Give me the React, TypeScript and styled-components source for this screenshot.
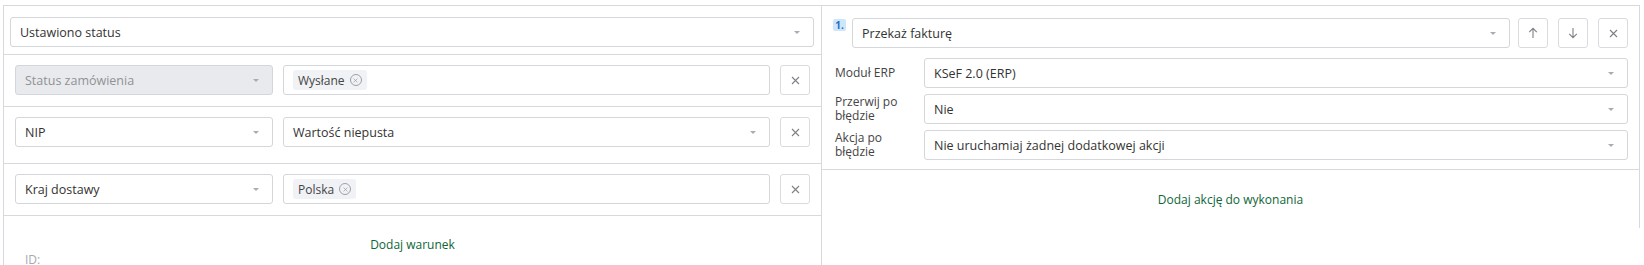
import styled, { createGlobalStyle } from 'styled-components';

import type { FunctionComponent, ReactNode } from 'react';

const GlobalStyle = createGlobalStyle`
  html, body {
    margin: 0;
    padding: 0;
    background: #fff;
  }

  body {
    font-family: "Open Sans", "Liberation Sans", sans-serif;
    color: #333;
    overflow: hidden;
  }
`;

const Page = styled.div`
  display: grid;
  grid-template-columns: 819px 818px;
  align-items: start;
  margin: 5px 0 0 3px;
  height: 260px;
`;

const LeftPanel = styled.section`
  height: 100%;
  overflow: hidden;
  border: 1px solid #d6d9dd;
  border-bottom: none;
  box-sizing: border-box;
`;

const RightPanel = styled.section`
  border-top: 1px solid #d6d9dd;
  border-right: 1px solid #d6d9dd;
  box-sizing: border-box;
`;

const TriggerSection = styled.div`
  padding: 11px 7px 7px 6px;
  border-bottom: 1px solid #d6d9dd;
`;

const ConditionRow = styled.div<{ $extraBottom?: number }>`
  display: grid;
  grid-template-columns: 258px 1fr 30px;
  gap: 10px;
  padding: 10px 11px ${({ $extraBottom = 0 }) => 11 + $extraBottom}px 11px;
  border-bottom: 1px solid #d6d9dd;
`;

const SelectBox = styled.div<{ $disabled?: boolean; $noArrow?: boolean }>`
  position: relative;
  display: flex;
  align-items: center;
  gap: 6px;
  height: 30px;
  box-sizing: border-box;
  padding: 0 ${({ $noArrow }) => ($noArrow ? '10px' : '28px')} 0 9px;
  border: 1px solid #d3d6db;
  border-radius: 3px;
  background: ${({ $disabled }) => ($disabled ? '#e9eaed' : '#fff')};
  color: ${({ $disabled }) => ($disabled ? '#8f9296' : '#333')};
  font-size: 12.5px;
  white-space: nowrap;

  &::after {
    content: '';
    display: ${({ $noArrow }) => ($noArrow ? 'none' : 'block')};
    position: absolute;
    right: 13px;
    top: 50%;
    margin-top: -1px;
    border-left: 3.5px solid transparent;
    border-right: 3.5px solid transparent;
    border-top: 3.5px solid #a9acb1;
  }
`;

const Tag = styled.span`
  display: inline-flex;
  align-items: center;
  gap: 5px;
  height: 20px;
  padding: 0 5px;
  border-radius: 3px;
  background: #f0f2f5;
  color: #444;
  font-size: 12px;
`;

const TagClose = styled.span`
  display: inline-flex;
  align-items: center;
  justify-content: center;
  width: 10px;
  height: 10px;
  border: 1px solid #9da1a6;
  border-radius: 50%;
  color: #8d9196;
`;

const IconButton = styled.button`
  display: flex;
  align-items: center;
  justify-content: center;
  width: 30px;
  height: 30px;
  padding: 0;
  border: 1px solid #d8dbdf;
  border-radius: 3px;
  background: #fff;
  color: #7d8186;
  cursor: pointer;
`;

const AddLink = styled.div`
  display: flex;
  align-items: center;
  justify-content: center;
  height: 17px;
  color: #0d6639;
  font-size: 12px;
  font-weight: 500;
`;

const LeftFooter = styled.div`
  padding-top: 20px;
`;

const RightFooter = styled.div`
  display: flex;
  align-items: center;
  justify-content: center;
  height: 58px;
`;

const IdLabel = styled.div`
  padding-left: 21px;
  margin-top: -2px;
  line-height: 17px;
  color: #a6a9ad;
  font-size: 12px;
`;

const ActionHeader = styled.div`
  display: flex;
  align-items: flex-start;
  gap: 6px;
  padding: 12px 11px 0 11px;
`;

const StepBadge = styled.span`
  display: flex;
  align-items: center;
  justify-content: center;
  width: 13px;
  height: 12px;
  margin-top: 1px;
  border-radius: 2px;
  background: #cfe5fa;
  color: #1d6fc1;
  font-size: 10px;
  font-weight: 700;
  line-height: 1;
`;

const HeaderSelect = styled(SelectBox)`
  flex: 1;
  margin-right: 2px;
`;

const HeaderButtons = styled.div`
  display: flex;
  gap: 10px;
`;

const FieldList = styled.div`
  display: flex;
  flex-direction: column;
  gap: 6px;
  padding: 10px 11px 9px 13px;
  border-bottom: 1px solid #d6d9dd;
`;

const FieldRow = styled.div`
  display: grid;
  grid-template-columns: 89px 1fr;
  align-items: center;
`;

const FieldLabel = styled.div`
  font-size: 12px;
  line-height: 14px;
  color: #444;
  padding-right: 8px;
`;

const CloseIcon: FunctionComponent<{ size?: number }> = ({ size = 9 }) => (
  <svg width={size} height={size} viewBox="0 0 9 9">
    <path d="M1 1 L8 8 M8 1 L1 8" stroke="currentColor" strokeWidth="1.1" />
  </svg>
);

const ArrowIcon: FunctionComponent<{ down?: boolean }> = ({ down }) => (
  <svg width="10" height="12" viewBox="0 0 10 12" style={down ? { transform: 'rotate(180deg)' } : undefined}>
    <path d="M5 11 V1.5 M1.2 5.2 L5 1.4 L8.8 5.2" stroke="currentColor" strokeWidth="1.1" fill="none" />
  </svg>
);

type Condition = {
  field: string;
  disabled?: boolean;
  value: ReactNode;
  valueIsSelect?: boolean;
  extraBottom?: number;
};

const chip = (label: string) => (
  <Tag>
    {label}
    <TagClose><CloseIcon size={5} /></TagClose>
  </Tag>
);

const conditions: Condition[] = [
  { field: 'Status zamówienia', disabled: true, value: chip('Wysłane') },
  { field: 'NIP', value: 'Wartość niepusta', valueIsSelect: true, extraBottom: 5 },
  { field: 'Kraj dostawy', value: chip('Polska') }
];

const fields = [
  { label: 'Moduł ERP', value: 'KSeF 2.0 (ERP)' },
  { label: 'Przerwij po błędzie', value: 'Nie' },
  { label: 'Akcja po błędzie', value: 'Nie uruchamiaj żadnej dodatkowej akcji' }
];

const App = () => (
  <>
    <GlobalStyle />
    <Page>
      <LeftPanel>
        <TriggerSection>
          <SelectBox>Ustawiono status</SelectBox>
        </TriggerSection>
        {conditions.map((c) => (
          <ConditionRow key={c.field} $extraBottom={c.extraBottom}>
            <SelectBox $disabled={c.disabled}>{c.field}</SelectBox>
            <SelectBox $noArrow={!c.valueIsSelect}>{c.value}</SelectBox>
            <IconButton><CloseIcon /></IconButton>
          </ConditionRow>
        ))}
        <LeftFooter>
          <AddLink>Dodaj warunek</AddLink>
          <IdLabel>ID:</IdLabel>
        </LeftFooter>
      </LeftPanel>

      <RightPanel>
        <ActionHeader>
          <StepBadge>1.</StepBadge>
          <HeaderSelect>Przekaż fakturę</HeaderSelect>
          <HeaderButtons>
            <IconButton><ArrowIcon /></IconButton>
            <IconButton><ArrowIcon down /></IconButton>
            <IconButton><CloseIcon /></IconButton>
          </HeaderButtons>
        </ActionHeader>
        <FieldList>
          {fields.map((f) => (
            <FieldRow key={f.label}>
              <FieldLabel>{f.label}</FieldLabel>
              <SelectBox>{f.value}</SelectBox>
            </FieldRow>
          ))}
        </FieldList>
        <RightFooter>
          <AddLink>Dodaj akcję do wykonania</AddLink>
        </RightFooter>
      </RightPanel>
    </Page>
  </>
);

export default App;
